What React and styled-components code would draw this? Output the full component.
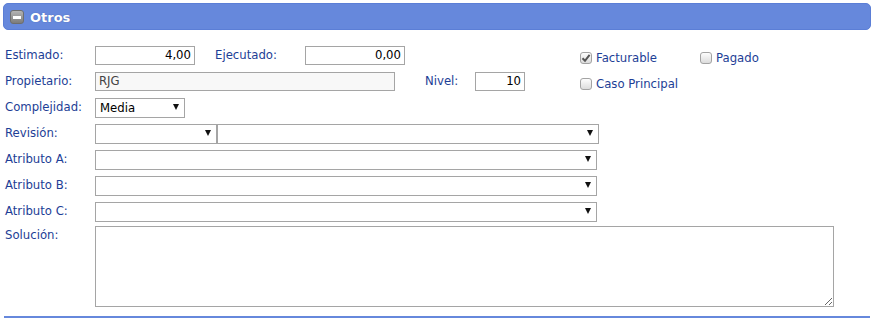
import React from "react";
import styled, { createGlobalStyle } from "styled-components";

const Global = createGlobalStyle`
  html, body { margin: 0; padding: 0; background: #fff; }
  body { font-family: "DejaVu Sans", Verdana, sans-serif; }
  * { box-sizing: border-box; }
`;

const Panel = styled.div`
  width: 868px;
  margin: 3px 0 0 3px;
`;

const Header = styled.div`
  height: 27px;
  display: flex;
  align-items: center;
  gap: 6px;
  padding-left: 6px;
  padding-top: 1px;
  background: #6688dc;
  border: 1px solid #5b7ed6;
  border-radius: 5px;
`;

const ToggleIcon = styled.span`
  width: 14px;
  height: 14px;
  border-radius: 3px;
  border: 1px solid #6e6e6e;
  background: linear-gradient(#b4b4b4, #7c7c7c);
  display: flex;
  align-items: center;
  justify-content: center;
  &::after {
    content: "";
    width: 8px;
    height: 3px;
    background: #fff;
  }
`;

const Title = styled.span`
  color: #fff;
  font-weight: bold;
  font-size: 13px;
  text-shadow: 0 0 1px rgba(40, 60, 120, 0.6);
`;

const Form = styled.div`
  display: flex;
  flex-direction: column;
  padding: 12px 0 0 2px;
`;

const Row = styled.div`
  display: flex;
  align-items: center;
  height: 26px;
`;

const TopRow = styled.div`
  display: flex;
  align-items: flex-start;
  margin-top: 2px;
`;

const Label = styled.span`
  width: ${(p) => p.$w || 90}px;
  margin-left: ${(p) => p.$ml || 0}px;
  padding-top: ${(p) => p.$pt || 0}px;
  flex: none;
  color: #1d3e96;
  font-size: 11.7px;
`;

const TextInput = styled.input`
  width: ${(p) => p.$w}px;
  height: 19px;
  flex: none;
  border: 1px solid #a5a5a5;
  padding: 0 3px;
  font: 11.7px "DejaVu Sans", Verdana, sans-serif;
  color: ${(p) => (p.$readonly ? "#444" : "#000")};
  background: ${(p) => (p.$readonly ? "#f8f8f8" : "#fff")};
  text-align: ${(p) => (p.$right ? "right" : "left")};
  outline: none;
`;

const SelectWrap = styled.span`
  position: relative;
  display: inline-block;
  flex: none;
  width: ${(p) => p.$w}px;
  height: 20px;
`;

const NativeSelect = styled.select`
  appearance: none;
  width: 100%;
  height: 100%;
  border: 1px solid #a5a5a5;
  border-radius: 0;
  background: #fff;
  padding: 0 0 0 4px;
  font: 11.7px "DejaVu Sans", Verdana, sans-serif;
  color: #000;
  outline: none;
`;

const Arrow = styled.span`
  position: absolute;
  right: 6px;
  top: 7px;
  width: 0;
  height: 0;
  border-left: 3.5px solid transparent;
  border-right: 3.5px solid transparent;
  border-top: 6px solid #111;
  pointer-events: none;
`;

const CheckGroup = styled.div`
  display: flex;
  margin-left: ${(p) => p.$ml}px;
  padding-top: 5px;
`;

const CheckItem = styled.label`
  display: flex;
  align-items: center;
  gap: 3px;
  width: ${(p) => (p.$w ? `${p.$w}px` : "auto")};
  color: #1d3e96;
  font-size: 11.7px;
`;

const Box = styled.span`
  width: 12px;
  height: 12px;
  border: 1px solid #a3a3a3;
  border-radius: 3px;
  background: linear-gradient(#fdfdfd, #dcdcdc);
  display: flex;
  align-items: center;
  justify-content: center;
`;

const CheckText = styled.span`
  padding-left: 1px;
`;

const TextArea = styled.textarea`
  width: 739px;
  height: 81px;
  border: 1px solid #a5a5a5;
  resize: both;
  font: 11.7px "DejaVu Sans", Verdana, sans-serif;
  outline: none;
`;

const Rule = styled.div`
  height: 2px;
  width: 866px;
  margin: 9px 0 0 1px;
  background: #6688dc;
`;

const Check = ({ checked, label, w }) => (
  <CheckItem $w={w}>
    <Box>
      {checked && (
        <svg width="10" height="10" viewBox="0 0 10 10">
          <path d="M1.5 5.2 L4 7.8 L8.6 1.8" stroke="#555" strokeWidth="2" fill="none" />
        </svg>
      )}
    </Box>
    <CheckText>{label}</CheckText>
  </CheckItem>
);

const Select = ({ w, value }) => (
  <SelectWrap $w={w}>
    <NativeSelect defaultValue={value || ""}>
      <option value="">{""}</option>
      {value && <option value={value}>{value}</option>}
    </NativeSelect>
    <Arrow />
  </SelectWrap>
);

export default function App() {
  return (
    <>
      <Global />
      <Panel>
        <Header>
          <ToggleIcon />
          <Title>Otros</Title>
        </Header>
        <Form>
          <Row>
            <Label>Estimado:</Label>
            <TextInput $w={100} $right defaultValue="4,00" />
            <Label $ml={20}>Ejecutado:</Label>
            <TextInput $w={100} $right defaultValue="0,00" />
            <CheckGroup $ml={175}>
              <Check checked label="Facturable" w={120} />
              <Check label="Pagado" />
            </CheckGroup>
          </Row>
          <Row>
            <Label>Propietario:</Label>
            <TextInput $w={300} $readonly readOnly defaultValue="RJG" />
            <Label $ml={30} $w={50}>Nivel:</Label>
            <TextInput $w={50} $right defaultValue="10" />
            <CheckGroup $ml={55}>
              <Check label="Caso Principal" />
            </CheckGroup>
          </Row>
          <Row>
            <Label>Complejidad:</Label>
            <Select w={90} value="Media" />
          </Row>
          <Row>
            <Label>Revisión:</Label>
            <Select w={122} />
            <Select w={382} />
          </Row>
          <Row>
            <Label>Atributo A:</Label>
            <Select w={502} />
          </Row>
          <Row>
            <Label>Atributo B:</Label>
            <Select w={502} />
          </Row>
          <Row>
            <Label>Atributo C:</Label>
            <Select w={502} />
          </Row>
          <TopRow>
            <Label $pt={2}>Solución:</Label>
            <TextArea />
          </TopRow>
        </Form>
        <Rule />
      </Panel>
    </>
  );
}
